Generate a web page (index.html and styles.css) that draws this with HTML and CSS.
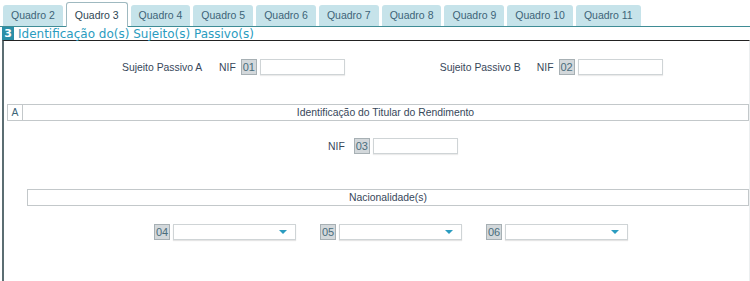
FILE: index.html
```html
<!DOCTYPE html>
<html lang="pt">
<head>
    <meta charset="UTF-8">
    <title>Quadro 3</title>
    <link rel="stylesheet" href="styles.css">
</head>
<body>
    <div class="tabs">
        <div class="tab">Quadro 2</div>
        <div class="tab active">Quadro 3</div>
        <div class="tab">Quadro 4</div>
        <div class="tab">Quadro 5</div>
        <div class="tab">Quadro 6</div>
        <div class="tab">Quadro 7</div>
        <div class="tab">Quadro 8</div>
        <div class="tab">Quadro 9</div>
        <div class="tab">Quadro 10</div>
        <div class="tab">Quadro 11</div>
    </div>

    <div class="panel-title">
        <span class="panel-num">3</span>
        <span>Identificação do(s) Sujeito(s) Passivo(s)</span>
    </div>

    <div class="panel-body">
        <div class="row row-sujeitos">
            <div class="field">
                <span class="label label-sp">Sujeito Passivo A</span>
                <span class="label">NIF</span>
                <span class="num">01</span>
                <input type="text" class="nif">
            </div>
            <div class="field">
                <span class="label label-sp">Sujeito Passivo B</span>
                <span class="label">NIF</span>
                <span class="num">02</span>
                <input type="text" class="nif">
            </div>
        </div>

        <div class="section section-a">
            <span class="section-letter">A</span>
            <div class="section-bar">Identificação do Titular do Rendimento</div>
        </div>

        <div class="row row-titular">
            <div class="field">
                <span class="label label-nif">NIF</span>
                <span class="num">03</span>
                <input type="text" class="nif">
            </div>
        </div>

        <div class="section section-nac">
            <div class="section-bar">Nacionalidade(s)</div>
        </div>

        <div class="row row-nac">
            <div class="field">
                <span class="num">04</span>
                <div class="select"><span class="arrow"></span></div>
            </div>
            <div class="field">
                <span class="num">05</span>
                <div class="select"><span class="arrow"></span></div>
            </div>
            <div class="field">
                <span class="num">06</span>
                <div class="select"><span class="arrow"></span></div>
            </div>
        </div>
    </div>
</body>
</html>
```

FILE: styles.css
```css
body {
    margin: 0;
    padding: 0;
    background-color: #fff;
    font-family: 'Liberation Sans', Arial, sans-serif;
    font-size: 10.4px;
    color: #37475a;
    height: 281px;
    overflow: hidden;
}
.tabs {
    display: flex;
    align-items: flex-end;
    gap: 3px;
    height: 26px;
    padding-left: 3px;
    border-bottom: 1px solid #3f8c95;
}
.tab {
    height: 21px;
    line-height: 21px;
    padding: 0 8px;
    font-size: 10.5px;
    background-color: #c6e3ea;
    color: #3d6478;
    border-radius: 3px 3px 0 0;
}
.tab.active {
    height: 24px;
    line-height: 24px;
    margin-bottom: -1px;
    background-color: #fff;
    border: 1px solid #9fb9c0;
    border-bottom: none;
    color: #2e4653;
}
.panel-title {
    display: flex;
    align-items: center;
    gap: 4px;
    height: 13px;
    padding-left: 2px;
    font-family: 'DejaVu Sans', Verdana, sans-serif;
    font-size: 12px;
    color: #2a9cc0;
}
.panel-num {
    width: 12px;
    height: 13px;
    line-height: 13px;
    background-color: #2b8fa8;
    color: #fff;
    font-weight: bold;
    font-size: 11px;
    text-align: center;
}
.panel-body {
    margin-left: 2px;
    height: 240px;
    border-top: 1px solid #222;
    border-left: 2px solid #5b6d72;
    border-right: 1px solid #eceff0;
}
.row {
    display: flex;
    align-items: center;
}
.field {
    display: flex;
    align-items: center;
}
.label {
    margin-right: 5px;
}
.label-sp {
    width: 97px;
    margin-right: 0;
}
.label-nif {
    margin-right: 9px;
}
.num {
    width: 14px;
    height: 14px;
    line-height: 14px;
    text-align: center;
    font-size: 11px;
    background-color: #d3d8db;
    border: 1px solid #a7b0b4;
    color: #4a6d7c;
    margin-right: 3px;
}
.nif {
    width: 83px;
    height: 14px;
    padding: 0;
    border: 1px solid #cfd4d6;
    box-shadow: 0 1px 1px rgba(0, 0, 0, 0.08);
    margin: 0;
}
.row-sujeitos {
    margin-top: 18px;
    padding-left: 118px;
    gap: 95px;
}
.section {
    display: flex;
    align-items: stretch;
    height: 17px;
}
.section-a {
    margin-top: 29px;
    padding-left: 3px;
}
.section-letter {
    width: 14px;
    line-height: 15px;
    text-align: center;
    border: 1px solid #c3c8ca;
    color: #3d6478;
}
.section-bar {
    flex: 1;
    line-height: 15px;
    text-align: center;
    border: 1px solid #c3c8ca;
    border-left: none;
    color: #37475a;
}
.section-nac .section-bar {
    border-left: 1px solid #c3c8ca;
}
.row-titular {
    margin-top: 17px;
    padding-left: 324px;
}
.section-nac {
    margin-top: 35px;
    padding-left: 23px;
}
.row-nac {
    margin-top: 18px;
    padding-left: 150px;
    gap: 24px;
}
.select {
    position: relative;
    width: 121px;
    height: 14px;
    border: 1px solid #cfd4d6;
    box-shadow: 0 1px 1px rgba(0, 0, 0, 0.1);
}
.arrow {
    position: absolute;
    right: 8px;
    top: 5px;
    width: 0;
    height: 0;
    border-left: 4px solid transparent;
    border-right: 4px solid transparent;
    border-top: 4px solid #2a9cc0;
}
```
